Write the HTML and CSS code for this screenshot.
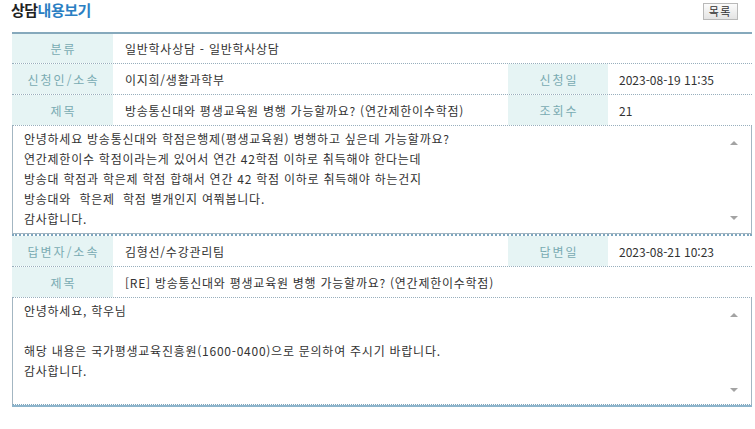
FILE: index.html
```html
<!DOCTYPE html>
<html lang="ko">
<head>
<meta charset="utf-8">
<title>상담내용보기</title>
<link rel="stylesheet" href="styles.css">
</head>
<body>
<div class="page">
  <div class="head">
    <h1 class="title"><span class="t-dark">상담</span><span class="t-blue">내용보기</span></h1>
    <button class="btn" type="button">목록</button>
  </div>
  <div class="board">
    <div class="row first">
      <div class="lbl">분류</div>
      <div class="val">일반학사상담 - 일반학사상담</div>
    </div>
    <div class="row">
      <div class="lbl">신청인/소속</div>
      <div class="val wide">이지희/생활과학부</div>
      <div class="lbl side">신청일</div>
      <div class="val end">2023-08-19 11:35</div>
    </div>
    <div class="row">
      <div class="lbl">제목</div>
      <div class="val wide">방송통신대와 평생교육원 병행 가능할까요? (연간제한이수학점)</div>
      <div class="lbl side">조회수</div>
      <div class="val end">21</div>
    </div>
    <div class="area q">
      <div class="area-text">안녕하세요 방송통신대와 학점은행제(평생교육원) 병행하고 싶은데 가능할까요?
연간제한이수 학점이라는게 있어서 연간 42학점 이하로 취득해야 한다는데
방송대 학점과 학은제 학점 합해서 연간 42 학점 이하로 취득해야 하는건지
방송대와  학은제  학점 별개인지 여쭤봅니다.
감사합니다.</div>
      <div class="sb"><span class="arr up"></span><span class="arr down"></span></div>
    </div>
    <div class="row">
      <div class="lbl">답변자/소속</div>
      <div class="val wide">김형선/수강관리팀</div>
      <div class="lbl side">답변일</div>
      <div class="val end">2023-08-21 10:23</div>
    </div>
    <div class="row">
      <div class="lbl">제목</div>
      <div class="val">[RE] 방송통신대와 평생교육원 병행 가능할까요? (연간제한이수학점)</div>
    </div>
    <div class="area a">
      <div class="area-text">안녕하세요, 학우님

해당 내용은 국가평생교육진흥원(1600-0400)으로 문의하여 주시기 바랍니다.
감사합니다.</div>
      <div class="sb"><span class="arr up"></span><span class="arr down"></span></div>
    </div>
  </div>
</div>
</body>
</html>
```
FILE: styles.css
```css
body {
  margin: 0;
  background: #fff;
  color: #333;
  font-family: "Noto Sans CJK KR", "Liberation Sans", sans-serif;
}

.page {
  width: 740px;
  padding-left: 12px;
}

.head {
  height: 32px;
  display: flex;
  justify-content: space-between;
  align-items: flex-start;
}

.title {
  margin: 0 0 0 -1px;
  height: 20px;
  font-size: 15px;
  line-height: 20px;
  font-weight: bold;
  letter-spacing: -0.5px;
}

.t-dark { color: #222; }
.t-blue { color: #2b7fc3; }

.btn {
  margin: 3px 14px 0 0;
  height: 17px;
  padding: 0 5px;
  border: 1px solid #b9b9b9;
  background: linear-gradient(#fbfbfb, #e4e4e4);
  color: #333;
  font-family: inherit;
  font-size: 11px;
  line-height: 15px;
  letter-spacing: 1.5px;
}

.board {
  border-top: 2px solid #86a9bc;
  border-bottom: 2px solid #8db4cb;
}

.row {
  display: flex;
  height: 30px;
  border-bottom: 1px dotted #98afbd;
}

.row.first { height: 29px; }

.lbl {
  flex: none;
  width: 101px;
  box-sizing: border-box;
  padding-left: 2px;
  background: #e6f4f4;
  color: #79abb2;
  font-size: 12px;
  letter-spacing: 2px;
  display: flex;
  align-items: center;
  justify-content: center;
}

.lbl.side { width: 100px; }

.val {
  flex: 1;
  padding-left: 12px;
  font-size: 12px;
  color: #333;
  letter-spacing: 0.75px;
  display: flex;
  align-items: center;
  white-space: nowrap;
}

.val.wide {
  flex: none;
  width: 395px;
  box-sizing: border-box;
}

.val.end {
  padding-left: 11px;
  letter-spacing: 0;
}

.area {
  display: flex;
  border-left: 1px solid #a3b6c2;
  border-right: 1px solid #a3b6c2;
}

.area.q {
  height: 107px;
  border-bottom: 1px solid #a3b6c2;
}

.area.q + .row {
  border-top: 2px dotted #7ea6be;
}

.area.a {
  height: 106px;
  border-bottom: 1px dotted #7ea6be;
}

.area-text {
  flex: 1;
  padding: 3px 0 0 11px;
  font-size: 12px;
  line-height: 20px;
  letter-spacing: 0.75px;
  color: #333;
  white-space: pre-wrap;
}

.sb {
  flex: none;
  width: 17px;
  margin-right: 9px;
  padding: 15px 0 13px;
  display: flex;
  flex-direction: column;
  justify-content: space-between;
  align-items: center;
}

.area.a .sb { padding-bottom: 12px; }

.arr {
  width: 0;
  height: 0;
  border-left: 4px solid transparent;
  border-right: 4px solid transparent;
}

.arr.up { border-bottom: 4px solid #a3a3a3; }
.arr.down { border-top: 4px solid #a3a3a3; }
```
